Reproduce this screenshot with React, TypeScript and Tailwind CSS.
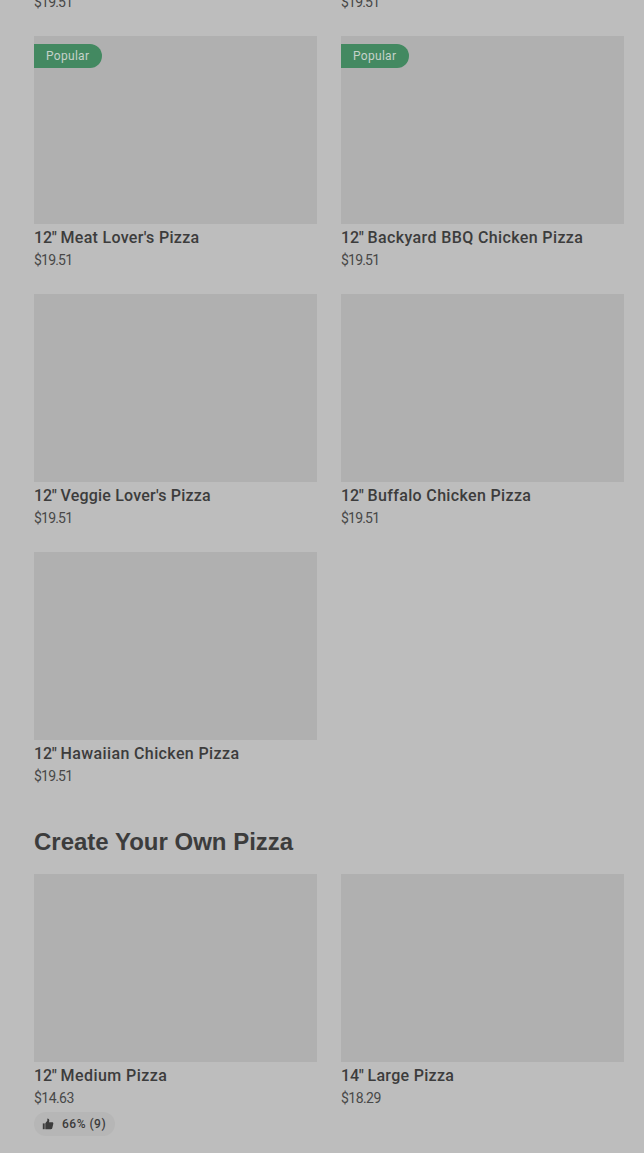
import React from "react";

interface Item {
  size: string;
  name: string;
  price: string;
  tracking: string;
  popular?: boolean;
  rating?: string;
}

const pizzas: Item[] = [
  { size: '12"', name: "Meat Lover's Pizza", price: "$19.51", tracking: "tracking-[0.3px]", popular: true },
  { size: '12"', name: "Backyard BBQ Chicken Pizza", price: "$19.51", tracking: "tracking-[0.38px]", popular: true },
  { size: '12"', name: "Veggie Lover's Pizza", price: "$19.51", tracking: "tracking-[0.2px]" },
  { size: '12"', name: "Buffalo Chicken Pizza", price: "$19.51", tracking: "tracking-[0.35px]" },
  { size: '12"', name: "Hawaiian Chicken Pizza", price: "$19.51", tracking: "tracking-[0.38px]" },
];

const customPizzas: Item[] = [
  { size: '12"', name: "Medium Pizza", price: "$14.63", tracking: "tracking-[0.45px]", rating: "66% (9)" },
  { size: '14"', name: "Large Pizza", price: "$18.29", tracking: "tracking-[0.3px]" },
];

function ThumbIcon() {
  return (
    <svg width="12" height="12" viewBox="0 0 12 12" fill="currentColor">
      <path d="M0.8 5.4h1.9v5.8H0.8z" />
      <path d="M3.3 5.2 5.3 2.7V0.6c1.3 0 2 .8 2 1.9L7 4.3h3.1c.9 0 1.4.7 1.2 1.5l-1 4.2c-.2.8-.7 1.2-1.5 1.2H3.3z" />
    </svg>
  );
}

function Price({ value }: { value: string }) {
  return (
    <p
      className={`h-5 text-sm leading-5 text-[#484848] ${
        value === "$19.51" ? "tracking-[-0.8px]" : "tracking-[-0.55px]"
      }`}
    >
      {value}
    </p>
  );
}

function Card({ item }: { item: Item }) {
  return (
    <div>
      <div className="h-[188px] bg-[#b0b0b0] pt-2">
        {item.popular && (
          <span className="flex h-6 w-[68px] items-center rounded-r-full bg-[#438961] pl-3 text-xs tracking-[0.3px] text-[#c5d2ca]">
            Popular
          </span>
        )}
      </div>
      <h3
        className={`h-6 whitespace-nowrap pt-px text-base font-medium leading-[26px] text-[#3c3c3c] ${item.tracking}`}
      >
        <span className="tracking-[-0.2px]">{item.size} </span>
        {item.name}
      </h3>
      <div className="pt-0.5">
        <Price value={item.price} />
      </div>
      {item.rating && (
        <span className="mt-1 flex h-6 w-[81px] items-center gap-2 rounded-full bg-[#b6b6b6] pl-2 text-xs font-medium tracking-[0.5px] text-[#3c3c3c]">
          <ThumbIcon />
          {item.rating}
        </span>
      )}
    </div>
  );
}

function App() {
  return (
    <main className="h-[1153px] overflow-hidden bg-[#bdbdbd] pl-[34px] pr-5 font-['Roboto',sans-serif]">
      <div className="grid h-3 grid-cols-2 content-end gap-x-6">
        <Price value="$19.51" />
        <Price value="$19.51" />
      </div>

      <div className="mt-6 grid grid-cols-2 gap-6">
        {pizzas.map((item) => (
          <Card key={item.name} item={item} />
        ))}
      </div>

      <h2 className="mt-10 mb-4 font-['Liberation_Sans',sans-serif] text-2xl font-bold leading-8 text-[#3c3c3c]">
        Create Your Own Pizza
      </h2>

      <div className="grid grid-cols-2 gap-6">
        {customPizzas.map((item) => (
          <Card key={item.name} item={item} />
        ))}
      </div>
    </main>
  );
}

export default App;
